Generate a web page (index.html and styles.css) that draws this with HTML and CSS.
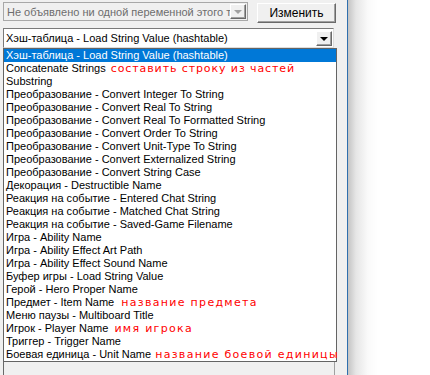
FILE: index.html
```html
<!DOCTYPE html>
<html lang="ru">
<head>
  <meta charset="UTF-8">
  <title>Строковые функции</title>
  <link rel="stylesheet" href="styles.css">
</head>
<body>
<div class="screen">
  <div class="dialog">
    <!-- Variable row -->
    <div class="top-row">
      <div class="combo disabled">
        <span class="combo-text">Не объявлено ни одной переменной этого типа</span>
        <span class="combo-btn"><span class="tri"></span></span>
      </div>
      <div class="button">Изменить</div>
    </div>

    <!-- Function picker -->
    <div class="combo picker">
      <span class="combo-text">Хэш-таблица - Load String Value (hashtable)</span>
      <span class="combo-btn"><span class="tri"></span></span>
    </div>

    <div class="dropdown">
      <div class="item selected">Хэш-таблица - Load String Value (hashtable)</div>
      <div class="item">Concatenate Strings <span class="note note-concat">составить строку из частей</span></div>
      <div class="item">Substring</div>
      <div class="item">Преобразование - Convert Integer To String</div>
      <div class="item">Преобразование - Convert Real To String</div>
      <div class="item">Преобразование - Convert Real To Formatted String</div>
      <div class="item">Преобразование - Convert Order To String</div>
      <div class="item">Преобразование - Convert Unit-Type To String</div>
      <div class="item">Преобразование - Convert Externalized String</div>
      <div class="item">Преобразование - Convert String Case</div>
      <div class="item">Декорация - Destructible Name</div>
      <div class="item">Реакция на событие - Entered Chat String</div>
      <div class="item">Реакция на событие - Matched Chat String</div>
      <div class="item">Реакция на событие - Saved-Game Filename</div>
      <div class="item">Игра - Ability Name</div>
      <div class="item">Игра - Ability Effect Art Path</div>
      <div class="item">Игра - Ability Effect Sound Name</div>
      <div class="item">Буфер игры - Load String Value</div>
      <div class="item">Герой - Hero Proper Name</div>
      <div class="item">Предмет - Item Name <span class="note note-item">название предмета</span></div>
      <div class="item">Меню паузы - Multiboard Title</div>
      <div class="item">Игрок - Player Name <span class="note note-player">имя игрока</span></div>
      <div class="item">Триггер - Trigger Name</div>
      <div class="item">Боевая единица - Unit Name <span class="note note-unit">название боевой единицы</span></div>
    </div>

    <div class="below-box"></div>
  </div>
  <div class="frame-edge"></div>
  <div class="backdrop"></div>
</div>
</body>
</html>
```

FILE: styles.css
```css
* {
  box-sizing: border-box;
}

html, body {
  margin: 0;
  height: 100%;
  overflow: hidden;
}

body {
  font-family: "Liberation Sans", Arial, sans-serif;
  font-size: 11px;
  color: #000;
  background: #fff;
}

.screen {
  display: flex;
  height: 375px;
}

.dialog {
  width: 347px;
  background: #f0f0f0;
  padding: 2px 0 0 3px;
  display: flex;
  flex-direction: column;
}

.frame-edge {
  width: 1px;
  background: #2f6fae;
}

.backdrop {
  flex: 1;
  background: linear-gradient(to right, #c4c4c4 0, #e6e6e6 8px, #fafafa 20px, #fff 30px);
}

/* top row */
.top-row {
  display: flex;
  align-items: flex-start;
  gap: 9px;
  height: 25px;
}

.combo {
  display: flex;
  align-items: center;
  background: #fff;
  border: 1px solid #7a7a7a;
  border-right-color: #dcdcdc;
  border-bottom-color: #dcdcdc;
  overflow: hidden;
}

.combo-text {
  flex: 1;
  white-space: nowrap;
  overflow: hidden;
  padding-left: 2px;
}

.combo-btn {
  width: 16px;
  height: 15px;
  margin-right: 1px;
  display: flex;
  align-items: center;
  justify-content: center;
  background: #f0f0f0;
  border: 1px solid;
  border-color: #fff #696969 #696969 #fff;
  box-shadow: inset -1px -1px #a0a0a0;
  flex-shrink: 0;
}

.tri {
  width: 0;
  height: 0;
  border-left: 4px solid transparent;
  border-right: 4px solid transparent;
  border-top: 4px solid #000;
  margin-top: 1px;
}

.combo.disabled {
  width: 245px;
  height: 19px;
  background: #f0f0f0;
  border-color: #a8a8a8;
  color: #6d6d6d;
}

.combo.disabled .combo-text {
  padding-left: 3px;
}

.combo.disabled .tri {
  border-top-color: #a0a0a0;
}

.button {
  width: 79px;
  height: 20px;
  margin-top: 1px;
  display: flex;
  align-items: center;
  justify-content: center;
  font-size: 12px;
  background: #f0f0f0;
  border: 1px solid;
  border-color: #fff #696969 #696969 #fff;
  box-shadow: inset -1px -1px #a0a0a0;
}

.combo.picker {
  width: 331px;
  height: 20px;
  margin-top: 1px;
}

/* dropdown list */
.dropdown {
  width: 334px;
  border: 1px solid #646464;
  background: #fff;
}

.item {
  height: 13px;
  line-height: 13px;
  padding-left: 2px;
  white-space: nowrap;
}

.item.selected {
  background: #0078d7;
  color: #fff;
}

/* red hand-written notes */
.note {
  color: #ff0000;
  font-family: "DejaVu Sans", sans-serif;
  font-size: 11px;
  letter-spacing: 1.3px;
}

.note-concat { margin-left: 2px; letter-spacing: 0.9px; }
.note-item { margin-left: 4px; }
.note-player { margin-left: 3px; }
.note-unit { margin-left: 1px; }

.below-box {
  width: 332px;
  flex: 1;
  border-left: 1px solid #696969;
  border-right: 1px solid #a0a0a0;
}
```
